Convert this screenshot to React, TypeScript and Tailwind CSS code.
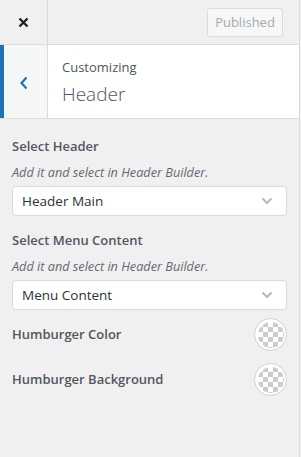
import React from 'react';

const font = { fontFamily: '"Open Sans", "Noto Sans", sans-serif' };

const Chevron = () => (
    <svg width="12" height="8" viewBox="0 0 12 8" fill="none">
        <path d="M1.5 1.5L6 6L10.5 1.5" stroke="#b4b9be" strokeWidth="2" />
    </svg>
);

const SelectBox = ({ value }: { value: string }) => (
    <div className="flex items-center justify-between h-[30px] px-[9px] bg-white border border-[#dcdcde] rounded-[4px]">
        <span className="text-[13.5px] text-[#2c3338]">{value}</span>
        <span className="mr-[4px]"><Chevron /></span>
    </div>
);

const Swatch = () => (
    <div className="w-[33px] h-[33px] rounded-full border border-[#d0d0d0] bg-white flex items-center justify-center">
        <div
            className="w-[26px] h-[26px] rounded-full"
            style={{
                backgroundImage:
                    'linear-gradient(45deg, #ccc 25%, transparent 25%, transparent 75%, #ccc 75%), linear-gradient(45deg, #ccc 25%, transparent 25%, transparent 75%, #ccc 75%)',
                backgroundSize: '10px 10px',
                backgroundPosition: '0 0, 5px 5px',
                backgroundColor: '#fff',
            }}
        />
    </div>
);

export default function App() {
    return (
        <div className="w-[301px] h-[457px] bg-[#f0f0f1] overflow-hidden" style={font}>
            <div className="w-[300px] h-full border-r border-[#dcdcde] flex flex-col">
                {/* Top bar */}
                <div className="flex h-[45px] border-b border-[#dcdcde]">
                    <div className="w-[48px] border-r border-[#dcdcde] flex items-center justify-center">
                        <svg width="11" height="11" viewBox="0 0 11 11">
                            <path d="M1.5 1.5L9.5 9.5M9.5 1.5L1.5 9.5" stroke="#1d2327" strokeWidth="2.4" />
                        </svg>
                    </div>
                    <div className="flex-1 flex items-start justify-end pt-[8px] pr-[16px]">
                        <div className="h-[29px] w-[76px] flex items-center justify-center rounded-[3px] border border-[#dcdcde] bg-[#f6f7f7] text-[13px] text-[#a7aaad]">
                            Published
                        </div>
                    </div>
                </div>

                {/* Section header */}
                <div className="flex h-[74px] bg-white border-b border-[#dcdcde]">
                    <div className="w-[48px] bg-[#f6f7f7] border-l-4 border-l-[#2271b1] border-r border-r-[#dcdcde] flex items-center justify-center pr-[4px] pt-[3px]">
                        <svg width="9" height="14" viewBox="0 0 9 14">
                            <path d="M7.5 1.5L2.5 7L7.5 12.5" stroke="#2271b1" strokeWidth="2.2" fill="none" />
                        </svg>
                    </div>
                    <div className="flex flex-col pl-[14px] pt-[13px]">
                        <span className="text-[13px] leading-[18px] text-[#50575e]">Customizing</span>
                        <span className="text-[19px] leading-[28px] mt-[4px] font-light text-[#50575e]">Header</span>
                    </div>
                </div>

                {/* Controls */}
                <div className="flex flex-col px-[12px] pt-[17px]">
                    <div className="text-[13px] leading-[20px] font-semibold text-[#50575e]">Select Header</div>
                    <div className="text-[12.7px] leading-[18px] italic text-[#646970] mt-[7px]">Add it and select in Header Builder.</div>
                    <div className="mt-[5px]"><SelectBox value="Header Main" /></div>

                    <div className="text-[13px] leading-[20px] font-semibold text-[#50575e] mt-[14px]">Select Menu Content</div>
                    <div className="text-[12.7px] leading-[18px] italic text-[#646970] mt-[7px]">Add it and select in Header Builder.</div>
                    <div className="mt-[5px]"><SelectBox value="Menu Content" /></div>

                    <div className="flex items-center justify-between mt-[8px] h-[33px]">
                        <span className="text-[13px] font-semibold text-[#50575e]">Humburger Color</span>
                        <Swatch />
                    </div>
                    <div className="flex items-center justify-between mt-[12px] h-[33px]">
                        <span className="text-[13px] font-semibold text-[#50575e]">Humburger Background</span>
                        <Swatch />
                    </div>
                </div>
            </div>
        </div>
    );
}
